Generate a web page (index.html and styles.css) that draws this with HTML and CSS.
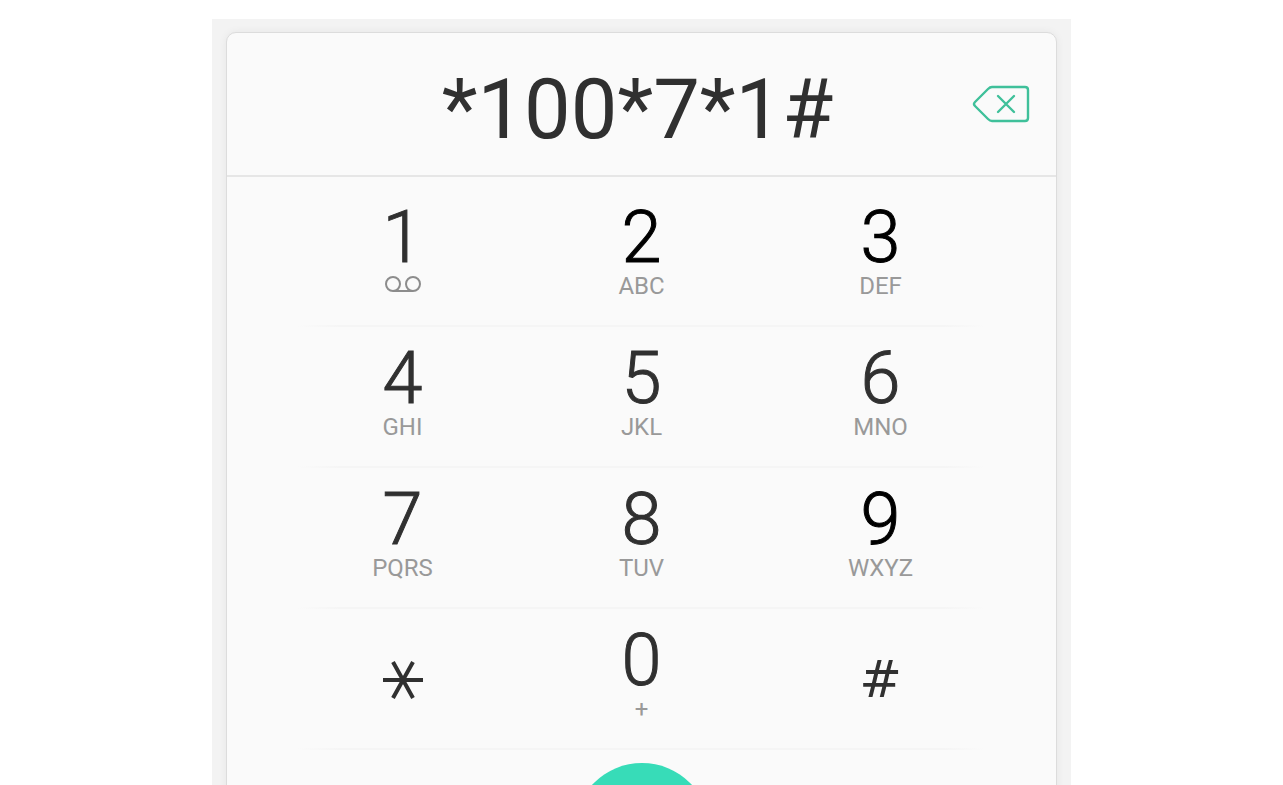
FILE: index.html
```html
<!DOCTYPE html>
<html lang="en">

<head>
    <meta charset="UTF-8">
    <meta name="viewport" content="width=device-width, initial-scale=1.0">
    <title>Dialer</title>
    <link rel="stylesheet" href="styles.css">
</head>

<body>
    <main class="phone">
        <div class="dialer">
            <div class="display">
                <input class="number" type="tel" value="*100*7*1#" aria-label="Phone number">
                <button class="backspace" type="button" aria-label="Delete">
                    <svg width="58" height="40" viewBox="0 0 58 40" fill="none" stroke="#3fc09a" stroke-width="2.4" stroke-linecap="round" stroke-linejoin="round">
                        <path d="M20 3H53Q56 3 56 6V34Q56 37 53 37H20Q18 37 16 35L3 22Q1 20 3 18L16 5Q18 3 20 3Z"/>
                        <path d="M26 12L42 28M42 12L26 28"/>
                    </svg>
                </button>
            </div>

            <div class="keypad">
                <div class="row">
                    <button class="key" type="button">
                        <span class="digit">1</span>
                        <svg class="voicemail" aria-label="Voicemail" width="38" height="20" viewBox="0 0 38 20" fill="none" stroke="#8c8c8c" stroke-width="2">
                            <circle cx="9" cy="9" r="7"/>
                            <circle cx="29" cy="9" r="7"/>
                            <path d="M9 16H29"/>
                        </svg>
                    </button>
                    <button class="key dark" type="button"><span class="digit">2</span><span class="letters">ABC</span></button>
                    <button class="key dark" type="button"><span class="digit">3</span><span class="letters">DEF</span></button>
                </div>
                <div class="row">
                    <button class="key" type="button"><span class="digit">4</span><span class="letters">GHI</span></button>
                    <button class="key" type="button"><span class="digit">5</span><span class="letters">JKL</span></button>
                    <button class="key" type="button"><span class="digit">6</span><span class="letters">MNO</span></button>
                </div>
                <div class="row">
                    <button class="key" type="button"><span class="digit">7</span><span class="letters">PQRS</span></button>
                    <button class="key" type="button"><span class="digit">8</span><span class="letters">TUV</span></button>
                    <button class="key dark" type="button"><span class="digit">9</span><span class="letters">WXYZ</span></button>
                </div>
                <div class="row">
                    <button class="key symbol" type="button" aria-label="Star">
                        <svg width="42" height="42" viewBox="0 0 42 42" stroke="#303030" stroke-width="4">
                            <path d="M1 21H41M11 3L31 39M31 3L11 39"/>
                        </svg>
                    </button>
                    <button class="key" type="button"><span class="digit">0</span><span class="letters">+</span></button>
                    <button class="key symbol" type="button">#</button>
                </div>
            </div>

            <button class="call" type="button" aria-label="Call"></button>
        </div>
    </main>
</body>

</html>
```

FILE: styles.css
```css
* {
    box-sizing: border-box;
}

body {
    display: flex;
    flex-direction: column;
    height: 100vh;
    margin: 0;
    padding-top: 19px;
    overflow: hidden;
    background-color: #fff;
    font-family: Roboto, Arial, sans-serif;
    color: #303030;
}

button {
    padding: 0;
    border: none;
    background: none;
    font-family: inherit;
    color: inherit;
    cursor: pointer;
}

.phone {
    flex: 1;
    min-height: 0;
    width: 100%;
    max-width: 859px;
    margin: 0 auto;
    padding: 13px 14px 0;
    overflow: hidden;
    background-color: #f3f3f3;
}

.dialer {
    border: 1px solid #dcdcdc;
    border-radius: 10px 10px 0 0;
    background-color: #fafafa;
    box-shadow: 0 0 8px rgba(0, 0, 0, 0.06);
}

.display {
    display: grid;
    grid-template-columns: 80px 1fr 88px;
    align-items: center;
    height: 144px;
    border-bottom: 2px solid #e6e6e6;
}

.number {
    grid-column: 2;
    width: 100%;
    height: 110px;
    padding: 10px 0 0;
    border: none;
    outline: none;
    background: none;
    font-family: inherit;
    font-size: 83px;
    color: #303030;
    text-align: center;
}

.backspace {
    justify-self: end;
    height: 40px;
    margin-right: 26px;
}

.backspace svg {
    display: block;
}

.keypad {
    max-width: 717px;
    margin: 0 auto;
    padding-top: 9px;
}

.row {
    display: grid;
    grid-template-columns: repeat(3, 1fr);
    height: 141px;
    background: linear-gradient(to right, transparent 2%, #f5f5f5 8%, #f5f5f5 92%, transparent 98%) bottom / 100% 2px no-repeat;
}

.key {
    display: flex;
    flex-direction: column;
    align-items: center;
    padding-top: 18px;
}

.digit {
    font-size: 72px;
    font-weight: 300;
    line-height: 68px;
    -webkit-text-stroke: 1px currentColor;
}

.dark .digit {
    color: #000;
}

.letters {
    font-size: 24px;
    line-height: 28px;
    color: #999;
}

.voicemail {
    margin-top: 3px;
}

.symbol {
    justify-content: center;
    padding-top: 0;
    font-family: "DejaVu Sans", sans-serif;
    font-size: 51px;
    line-height: 56px;
}

.call {
    display: block;
    width: 136px;
    height: 136px;
    margin: 13px auto;
    border-radius: 50%;
    background-color: #37dcb8;
}
```
